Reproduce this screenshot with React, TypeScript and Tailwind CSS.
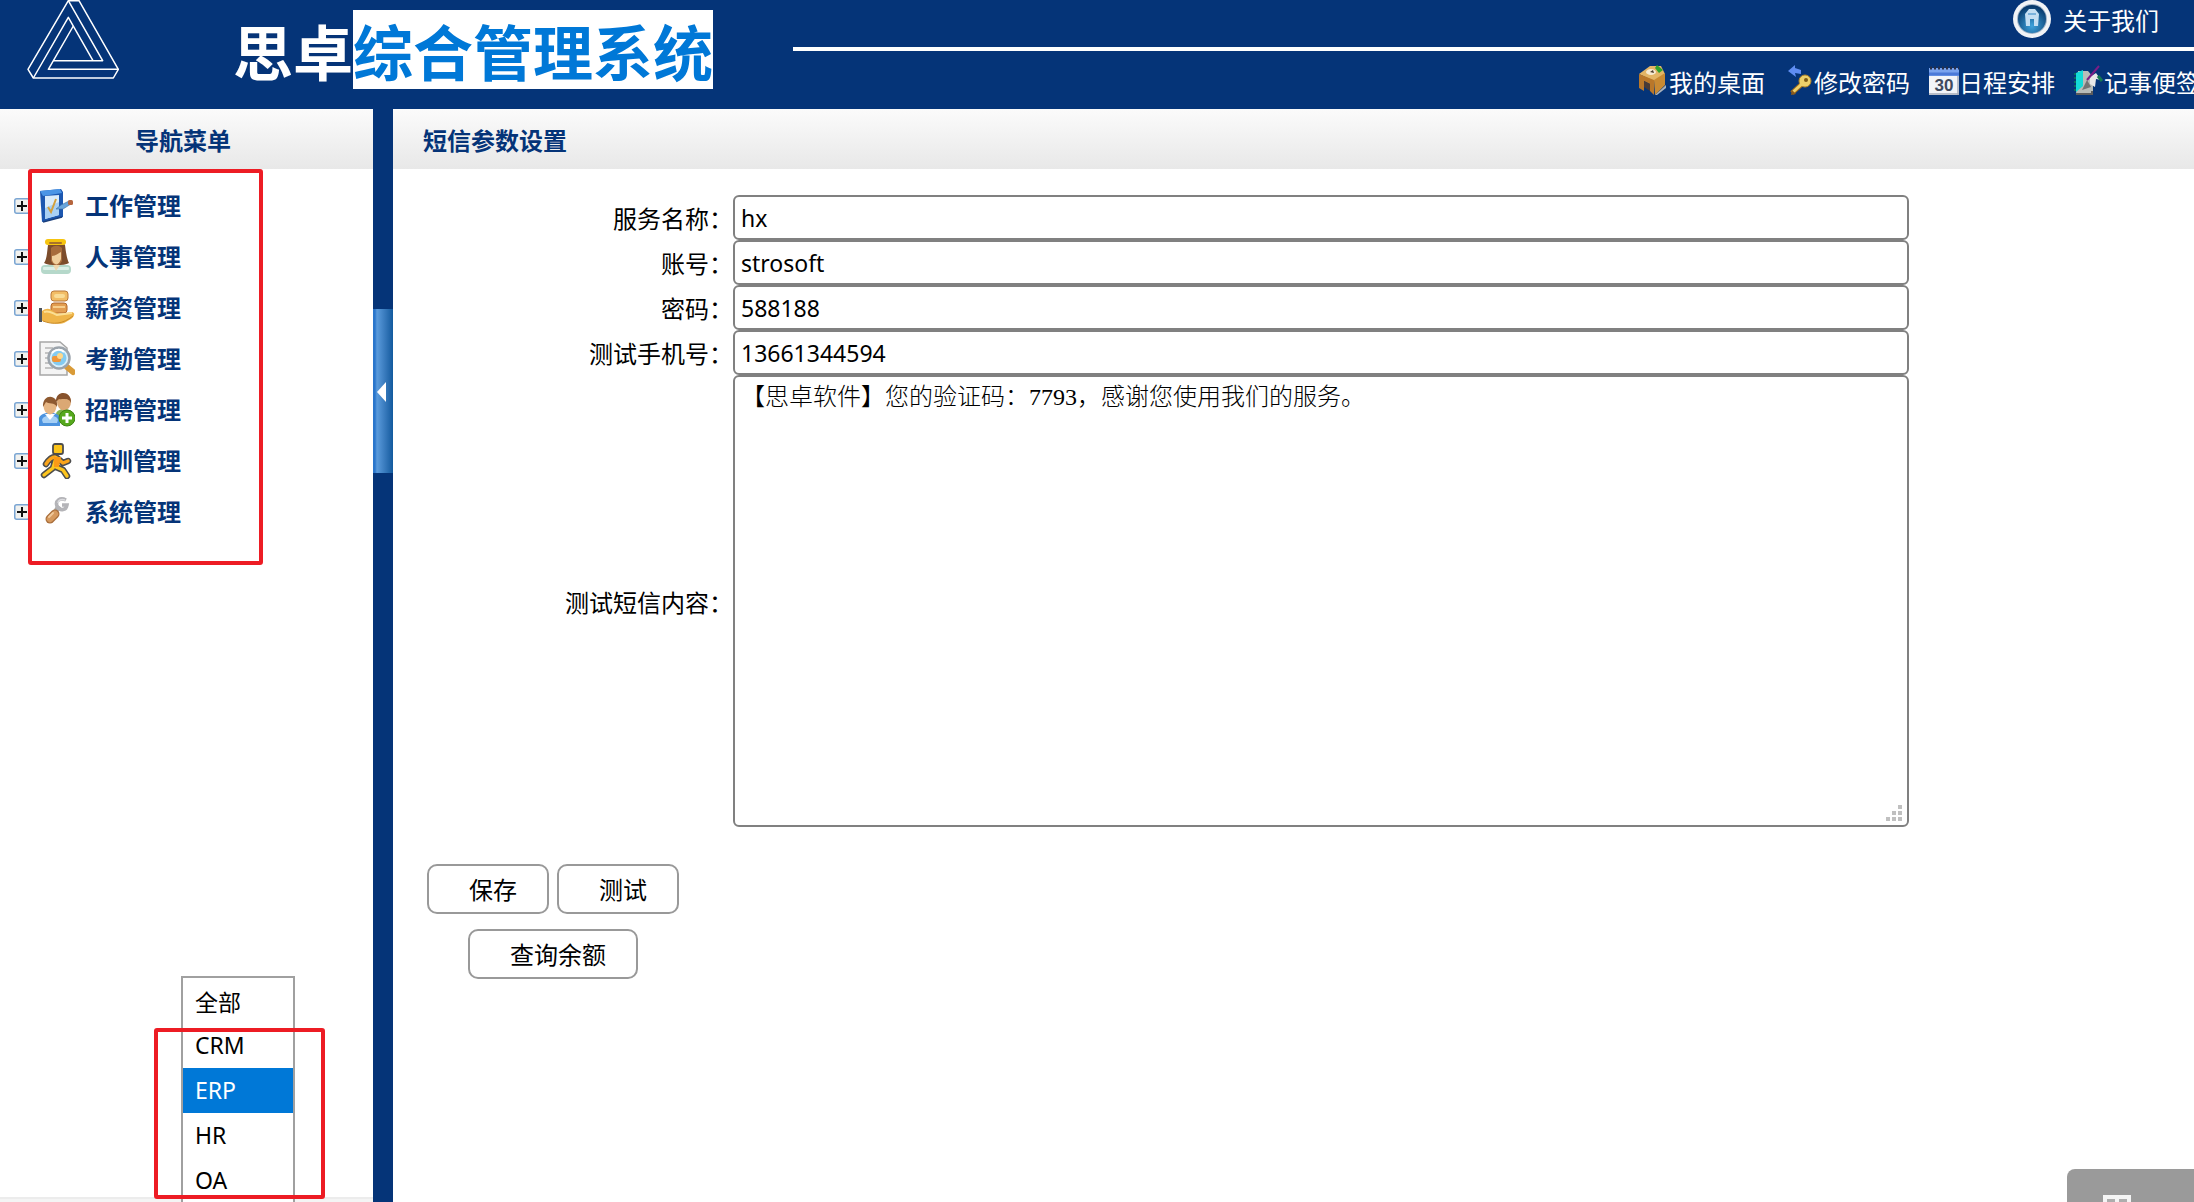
import React from "react";

const menu = [
  { id: "work", title: "工作管理" },
  { id: "people", title: "人事管理" },
  { id: "salary", title: "薪资管理" },
  { id: "attendance", title: "考勤管理" },
  { id: "hiring", title: "招聘管理" },
  { id: "training", title: "培训管理" },
  { id: "system", title: "系统管理" },
];

const quickLinks = [
  { id: "desktop", title: "我的桌面" },
  { id: "password", title: "修改密码" },
  { id: "schedule", title: "日程安排" },
  { id: "notes", title: "记事便签" },
];

const fields = [
  { id: "service", label: "服务名称：", value: "hx" },
  { id: "account", label: "账号：", value: "strosoft" },
  { id: "secret", label: "密码：", value: "588188" },
  { id: "phone", label: "测试手机号：", value: "13661344594" },
];

const systems = ["全部", "CRM", "ERP", "HR", "OA"];

const Logo = () => (
  <svg
    viewBox="51 0 276 240"
    className="w-[92px] h-20 shrink-0"
    fill="none"
    stroke="#fff"
    strokeWidth="4.5"
    strokeLinejoin="round"
  >
    <path d="M175 2H207L325 208L310 234H70L54 208Z" />
    <path d="M175 2L278 182H130" />
    <path d="M70 234L175 52L249 182" />
    <path d="M190 78L115 208H325" />
  </svg>
);

const MenuIcon = ({ id }: { id: string }) => (
  <svg viewBox="0 0 36 36" className="w-9 h-9 shrink-0">
    {id === "work" && (
      <>
        <path d="M1 3L22 1L24 4V29L3 34Z" fill="#1c57b0" />
        <path d="M1 3L21 1L23 5L4 8Z" fill="#4b95e6" />
        <path d="M6 8L20 7V27L6 31Z" fill="#d9ebfb" />
        <path d="M6 20L20 14V27L6 31Z" fill="#a9d0f4" />
        <path d="M9 19L12 24L17 11" fill="none" stroke="#d3a03c" strokeWidth="2" />
        <path d="M17 21L22 17L30 13L32 16L24 21Z" fill="#69a5dc" stroke="#3f6f9f" strokeWidth="0.6" />
        <rect x="29" y="12" width="5" height="5" rx="1.5" fill="#b5653e" />
        <path d="M4 34L23 29" stroke="#1a3f7c" strokeWidth="1.5" />
      </>
    )}
    {id === "people" && (
      <>
        <rect x="2" y="26" width="30" height="9" rx="4" fill="#b5d8ca" />
        <rect x="4" y="28" width="26" height="3" rx="1" fill="#dcefe7" />
        <path d="M9 6C11 2 24 2 26 6C27 14 28 20 30 24C25 27 10 27 5 24C8 20 8 13 9 6Z" fill="#7c4c2b" />
        <path d="M12 9C15 6 20 6 23 9V22C20 28 15 28 12 22Z" fill="#a76c3c" />
        <path d="M13 17C16 17 20 14 22 13V20C20 27 15 27 13 21Z" fill="#f0cf9d" />
        <path d="M14 26L17 32L21 26Z" fill="#eed7ae" />
        <rect x="6" y="0" width="21" height="6" rx="3" fill="#f6c40f" />
        <rect x="10" y="3" width="13" height="2" rx="1" fill="#a8722b" />
      </>
    )}
    {id === "salary" && (
      <>
        <rect x="12" y="1" width="17" height="10" rx="3" fill="#f2bd66" stroke="#b9783a" />
        <rect x="15" y="4" width="11" height="4" rx="2" fill="#f9dc97" />
        <rect x="12" y="13" width="16" height="10" rx="3" fill="#e29d51" stroke="#b0672b" />
        <path d="M14 17H26" stroke="#f7cf8d" strokeWidth="2" />
        <path d="M3 21C8 17 12 19 15 22L21 24L33 22C37 23 35 27 32 29L25 33C18 35 12 33 3 31Z" fill="#efb549" />
        <path d="M5 22C10 20 13 23 18 25L33 23" fill="none" stroke="#fbdf94" strokeWidth="2" />
        <path d="M4 31C14 35 24 34 34 26" fill="none" stroke="#c98b28" />
        <rect x="0" y="18" width="3" height="14" fill="#4c545e" />
      </>
    )}
    {id === "attendance" && (
      <>
        <path d="M1 1H21L28 7V34H1Z" fill="#f4f4f4" stroke="#a6a6a6" strokeWidth="1.5" />
        <path d="M6 7H14M6 12H11M6 17H9M6 22H10M6 27H14" stroke="#c4c4c4" strokeWidth="2" />
        <path d="M28 26L34 31" stroke="#d99b38" strokeWidth="6" strokeLinecap="round" />
        <circle cx="20" cy="17" r="10.5" fill="#d9f0fb" stroke="#9ba3ab" strokeWidth="2.5" />
        <circle cx="20" cy="17" r="7.5" fill="#84cbf0" />
        <rect x="13" y="15" width="9" height="6" rx="2" fill="#f0963a" />
        <circle cx="21" cy="15" r="3" fill="#ffd88a" />
        <path d="M13 12C16 8 22 8 25 11" fill="none" stroke="#fff" strokeWidth="2" />
      </>
    )}
    {id === "hiring" && (
      <>
        <path d="M17 22C18 15 34 15 35 24V31H17Z" fill="#7fb24e" />
        <ellipse cx="25" cy="10" rx="7" ry="8.5" fill="#dba874" />
        <path d="M17 10C16 -2 33 -2 32 11C30 5 22 8 20 7Z" fill="#87522c" />
        <path d="M0 34V26C2 19 20 19 21 26V34Z" fill="#4c93df" />
        <path d="M3 28C4 22 18 22 19 28L18 31H4Z" fill="#a5cff5" />
        <path d="M6 22L11 28L16 22Z" fill="#fff" />
        <ellipse cx="11" cy="14" rx="6.5" ry="8.5" fill="#e6b684" />
        <path d="M4 15C3 1 20 2 18 15C16 10 9 12 7 10Z" fill="#8e5930" />
        <circle cx="28" cy="26" r="8" fill="#56a81d" stroke="#3d8512" />
        <path d="M28 21V31M23 26H33" stroke="#fff" strokeWidth="3" />
      </>
    )}
    {id === "training" && (
      <>
        <path
          d="M16 14C12 14 9 18 7 21M17 15L14 25L5 32M17 24L24 27L28 33M18 15L24 20L29 18"
          fill="none"
          stroke="#4d4d4d"
          strokeWidth="6.5"
          strokeLinejoin="round"
          strokeLinecap="round"
        />
        <rect x="14" y="1" width="10" height="10" rx="2" fill="#fcc419" stroke="#4d4d4d" strokeWidth="1.8" />
        <path
          d="M16 14C12 14 9 18 7 21M18 15L24 20L29 18"
          fill="none"
          stroke="#fba51a"
          strokeWidth="3.4"
          strokeLinejoin="round"
          strokeLinecap="round"
        />
        <path
          d="M17 15L14 25L5 32M17 24L24 27L28 33"
          fill="none"
          stroke="#fdc51d"
          strokeWidth="3.4"
          strokeLinejoin="round"
          strokeLinecap="round"
        />
        <path d="M15 14H22L20 24H15Z" fill="#fb9a17" />
      </>
    )}
    {id === "system" && (
      <>
        <path d="M17 17L20 12" stroke="#a9a9a9" strokeWidth="5" />
        <path
          d="M27 6C21 3 16 7 18 12C20 17 27 17 28 11H23"
          fill="none"
          stroke="#b4b4b8"
          strokeWidth="3.6"
        />
        <path d="M26 6C22 5 19 6 19 9" fill="none" stroke="#dcdcdf" strokeWidth="1.5" />
        <path d="M11 25L16 20" stroke="#a96e3b" strokeWidth="9" strokeLinecap="round" />
        <path d="M11 25L16 20" stroke="#d69a5f" strokeWidth="6.5" strokeLinecap="round" />
        <path d="M10 23L14 19" stroke="#f0c899" strokeWidth="2" strokeLinecap="round" />
      </>
    )}
  </svg>
);

const QuickIcon = ({ id }: { id: string }) => (
  <svg viewBox="0 0 30 30" className="w-[30px] h-[30px] shrink-0">
    {id === "desktop" && (
      <>
        <path d="M0 9L11 1H22L26 9L15 16Z" fill="#e3b566" />
        <path d="M0 9L15 15V30L11 26V19L5 16V26L0 23Z" fill="#b9772a" />
        <path d="M15 15L26 8V20L16 30Z" fill="#c98a33" />
        <path d="M5 16L11 19V26L5 22Z" fill="#4a3a35" />
        <path d="M16 30L27 20V23L18 30Z" fill="#a9b1bb" />
        <ellipse cx="12" cy="7" rx="5" ry="3" fill="#f6ead2" />
        <path d="M11 7L14 5L15 8Z" fill="#4e3d2c" />
        <path d="M16 3L18 0L24 5L20 8Z" fill="#2fa32b" />
      </>
    )}
    {id === "password" && (
      <>
        <path d="M4 6L11 0V3L17 5V9L11 8L12 12Z" fill="#5f8df2" />
        <path d="M8 28L19 18" stroke="#a06a18" strokeWidth="5" />
        <circle cx="21" cy="16" r="6" fill="#ecd06b" stroke="#b58526" />
        <path d="M9 27L19 18" stroke="#ecd06b" strokeWidth="3" />
        <path d="M8 25L7 30L12 29" fill="#8a5a1c" />
        <circle cx="22" cy="15" r="2" fill="#7c5a16" />
      </>
    )}
    {id === "schedule" && (
      <>
        <rect x="0" y="3" width="30" height="27" fill="#f2f4f8" />
        <rect x="0" y="3" width="30" height="8" fill="#7aa3ee" />
        <path d="M0 9H30" stroke="#4b79d8" strokeWidth="3" />
        <path d="M1 3H30" stroke="#27304a" strokeWidth="3" strokeDasharray="2 2" />
        <path d="M0 29H30M29 11V30" stroke="#a5abb8" strokeWidth="1.5" />
        <text
          x="15"
          y="26"
          textAnchor="middle"
          fontSize="17"
          fontWeight="700"
          fontFamily="Liberation Sans"
          fill="#3f4a5e"
        >
          30
        </text>
      </>
    )}
    {id === "notes" && (
      <>
        <path d="M4 6H14L19 12V29H2Z" fill="#b9bdb9" />
        <path d="M2 29H18V26" fill="none" stroke="#5d5d5d" strokeWidth="2" />
        <path d="M2 8L9 5V21L2 27Z" fill="#13dbd8" />
        <path d="M1 8V27" stroke="#0b6b5e" strokeWidth="2" strokeDasharray="2 2" />
        <path d="M8 25L13 15L17 22Z" fill="#747474" />
        <path d="M16 12L22 8L27 15L22 14L21 22L16 19Z" fill="#e9e9e9" />
        <path d="M13 15L25 1" stroke="#7b1d86" strokeWidth="2" />
        <path d="M24 11L28 16" stroke="#157a52" strokeWidth="3" />
      </>
    )}
  </svg>
);

const HomeIcon = () => (
  <svg viewBox="0 0 38 38" className="w-[38px] h-[38px] shrink-0">
    <defs>
      <radialGradient id="globe" cx="0.5" cy="0.75" r="0.7">
        <stop offset="0" stopColor="#3fa3dc" />
        <stop offset="1" stopColor="#07386b" />
      </radialGradient>
    </defs>
    <circle cx="19" cy="19" r="19" fill="#f1f3f6" />
    <circle cx="19" cy="19" r="15" fill="#9fb3c8" />
    <circle cx="19" cy="19" r="14" fill="url(#globe)" />
    <path d="M12 14L16 9H22L26 14L25 26H21V19H17V26H13Z" fill="#c4def2" />
    <rect x="15" y="13" width="8" height="2" fill="#7ab2dc" />
  </svg>
);

const PlusBox = () => (
  <svg viewBox="0 0 16 16" className="w-4 h-4 shrink-0">
    <rect x="0.75" y="0.75" width="14.5" height="14.5" rx="2" fill="#f1f1ee" stroke="#7ba6d3" strokeWidth="1.5" />
    <path d="M3 8H13M8 3V13" stroke="#111" strokeWidth="2" />
  </svg>
);

const App = () => {
  return (
    <div className="h-screen flex flex-col overflow-hidden bg-white text-2xl text-black font-['Noto_Sans_CJK_SC',sans-serif]">
      {/* Header */}
      <header className="flex h-[109px] shrink-0 bg-[#053478] text-white whitespace-nowrap">
        <div className="pl-[27px] pr-[114px]">
          <Logo />
        </div>
        <h1 className="mt-[10px] mr-20 h-[79px] text-[60px] leading-[79px] font-bold">
          思卓<span className="inline-block h-[79px] bg-white text-[#0078d7]">综合管理系统</span>
        </h1>
        <div className="flex-1 min-w-0">
          <div className="h-[51px] border-b-4 border-white flex justify-end pr-[35px]">
            <a href="#about" className="h-[38px] flex items-center gap-3">
              <HomeIcon />
              <span className="pt-0.5">关于我们</span>
            </a>
          </div>
          <nav className="h-[58px] flex items-center justify-end gap-[19px] -mr-1.5">
            {quickLinks.map((link) => (
              <a key={link.id} href={`#${link.id}`} className="h-[30px] flex items-center shrink-0">
                <QuickIcon id={link.id} />
                <span className="pt-1">{link.title}</span>
              </a>
            ))}
          </nav>
        </div>
      </header>

      <div className="flex flex-1 min-h-0">
        {/* Sidebar */}
        <aside className="relative w-[373px] shrink-0 flex flex-col">
          <h2 className="h-[60px] pr-[7px] pt-0.5 flex items-center justify-center bg-linear-to-b from-[#fbfbfb] to-[#e8e8e8] text-[#053478] font-bold">
            导航菜单
          </h2>
          <ul className="flex-1 pt-[11px] pl-3.5">
            {menu.map((item) => (
              <li key={item.id} className="h-[51px] flex items-center">
                <button aria-label={`展开${item.title}`} className="mr-[9px]">
                  <PlusBox />
                </button>
                <a
                  href={`#${item.id}`}
                  className="h-9 flex items-center gap-2.5 font-bold text-[#053478]"
                >
                  <MenuIcon id={item.id} />
                  <span className="pb-0.5">{item.title}</span>
                </a>
              </li>
            ))}
          </ul>
          <div className="h-[5px] bg-[#f4f4f4] border-t-2 border-[#ececec]" />

          {/* System list, opened over the sidebar */}
          <select
            size={6}
            defaultValue="ERP"
            aria-label="系统"
            className="absolute left-[181px] top-[867px] w-[114px] h-[280px] overflow-hidden border-2 border-[#a0a0a0] bg-white text-[23px] font-['Noto_Sans','Noto_Sans_CJK_SC',sans-serif] outline-none"
          >
            {systems.map((name) => (
              <option
                key={name}
                value={name}
                className="h-[45px] px-3 pt-1.5 pb-0 checked:bg-linear-to-r checked:from-[#0078d7] checked:to-[#0078d7] checked:[-webkit-text-fill-color:white]"
              >
                {name}
              </option>
            ))}
          </select>

          {/* Highlight frames */}
          <div className="absolute left-7 top-[60px] w-[235px] h-[396px] border-4 border-[#ed1c24] rounded-[3px] pointer-events-none" />
          <div className="absolute left-[154px] top-[919px] w-[171px] h-[171px] border-4 border-[#ed1c24] rounded-[3px] pointer-events-none" />
        </aside>

        {/* Splitter */}
        <div className="w-5 shrink-0 bg-[#053478] pt-[200px]">
          <button
            aria-label="收起菜单"
            className="w-5 h-[164px] pt-0.5 pr-0.5 flex items-center justify-center bg-linear-to-r from-[#2a76cc] from-10% via-[#5a9bdc] via-20% to-[#105a9e]"
          >
            <svg viewBox="0 0 10 20" className="w-2.5 h-5">
              <path d="M0 10L9 0V20Z" fill="#fff" />
            </svg>
          </button>
        </div>

        {/* Content */}
        <main className="flex-1 min-w-0">
          <h2 className="h-[60px] pl-[30px] pt-0.5 flex items-center bg-linear-to-b from-[#fbfbfb] to-[#e8e8e8] text-[#053478] font-bold">
            短信参数设置
          </h2>
          <form onSubmit={(e) => e.preventDefault()} className="pt-[26px]">
            <div className="grid grid-cols-[340px_minmax(0,1fr)] items-center pr-[285px]">
              {fields.map((field) => (
                <React.Fragment key={field.id}>
                  <label htmlFor={field.id} className="text-right">
                    {field.label}
                  </label>
                  <input
                    id={field.id}
                    defaultValue={field.value}
                    className="w-full h-[45px] px-1.5 border-2 border-[#808080] rounded-md bg-white text-[23px] font-['Noto_Sans','Noto_Sans_CJK_SC',sans-serif]"
                  />
                </React.Fragment>
              ))}
              <label htmlFor="content" className="text-right pt-0.5">
                测试短信内容：
              </label>
              <div className="relative h-[452px]">
                <textarea
                  id="content"
                  defaultValue="【思卓软件】您的验证码：7793，感谢您使用我们的服务。"
                  className="w-full h-full px-1.5 py-1 border-2 border-[#808080] rounded-md bg-white resize-none leading-8 font-normal font-['Liberation_Serif','Noto_Sans_CJK_SC_Light','Noto_Sans_CJK_SC',serif]"
                />
                <svg
                  viewBox="0 0 16 16"
                  className="absolute right-[7px] bottom-1.5 w-4 h-4 pointer-events-none"
                  fill="#c0c0c0"
                >
                  <path d="M12 0h4v4h-4zM6 6h4v4h-4zM12 6h4v4h-4zM0 12h4v4h-4zM6 12h4v4h-4zM12 12h4v4h-4z" />
                </svg>
              </div>
            </div>

            <div className="mt-[37px] pl-[34px] flex gap-2">
              <button className="h-[50px] pl-10 pr-[30px] border-2 border-[#999] rounded-[10px]">
                保存
              </button>
              <button className="h-[50px] pl-10 pr-[30px] border-2 border-[#999] rounded-[10px]">
                测试
              </button>
            </div>
            <div className="mt-[15px] pl-[75px] flex">
              <button className="h-[50px] pl-10 pr-[30px] border-2 border-[#999] rounded-[10px]">
                查询余额
              </button>
            </div>
          </form>
        </main>
      </div>

      {/* Floating tool tab */}
      <button
        aria-label="工具"
        className="fixed right-0 bottom-0 w-[127px] h-[33px] pl-9 pt-[26px] flex items-start rounded-tl-lg bg-[#9a9a9a] overflow-hidden"
      >
        <svg viewBox="0 0 28 28" className="w-7 h-7 shrink-0">
          <rect width="28" height="28" fill="#f4f4f4" />
          <path d="M4 4h8v8h-8zM16 4h8v8h-8zM4 16h8v8h-8zM16 16h8v8h-8z" fill="#adadad" />
        </svg>
      </button>
    </div>
  );
};

export default App;
